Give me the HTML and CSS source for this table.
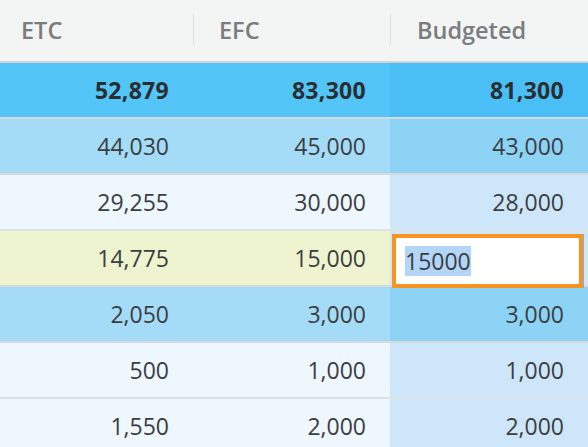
FILE: index.html
```html
<!DOCTYPE html>
<html lang="en">
<head>
    <meta charset="UTF-8">
    <meta name="viewport" content="width=device-width, initial-scale=1.0">
    <title>Budget Grid</title>
    <link rel="stylesheet" href="styles.css">
</head>
<body>
    <div class="grid">
        <!-- Column headers -->
        <div class="row header">
            <div class="cell">ETC</div>
            <div class="cell sep">EFC</div>
            <div class="cell sep">Budgeted</div>
        </div>

        <div class="row total">
            <div class="cell">52,879</div>
            <div class="cell">83,300</div>
            <div class="cell budget">81,300</div>
        </div>
        <div class="row group">
            <div class="cell">44,030</div>
            <div class="cell">45,000</div>
            <div class="cell budget">43,000</div>
        </div>
        <div class="row item">
            <div class="cell">29,255</div>
            <div class="cell">30,000</div>
            <div class="cell budget">28,000</div>
        </div>
        <div class="row editing">
            <div class="cell">14,775</div>
            <div class="cell">15,000</div>
            <div class="cell budget">
                <div class="edit-box"><span class="selected">15000</span></div>
            </div>
        </div>
        <div class="row group">
            <div class="cell">2,050</div>
            <div class="cell">3,000</div>
            <div class="cell budget">3,000</div>
        </div>
        <div class="row item">
            <div class="cell">500</div>
            <div class="cell">1,000</div>
            <div class="cell budget">1,000</div>
        </div>
        <div class="row item">
            <div class="cell">1,550</div>
            <div class="cell">2,000</div>
            <div class="cell budget">2,000</div>
        </div>
    </div>
</body>
</html>
```

FILE: styles.css
```css
body {
    margin: 0;
    padding: 0;
    font-family: "Open Sans", Arial, sans-serif;
    font-size: 23px;
    color: #3b3e41;
    background: #eff6fe;
    overflow: hidden;
}

.grid {
    width: 588px;
}

.row {
    display: grid;
    grid-template-columns: 193px 197px 1fr;
    height: 54px;
    border-bottom: 2px solid #d4dadd;
}

.cell {
    display: flex;
    align-items: center;
    justify-content: flex-end;
    padding-right: 24px;
}

/* Header */
.header {
    height: 61px;
    background-color: #f3f4f4;
    border-bottom: 2px solid #d2d4d5;
}

.header .cell {
    justify-content: flex-start;
    padding-left: 21px;
    color: #7a7c7d;
    font-weight: 600;
    font-size: 23.5px;
    padding-bottom: 2px;
}

.header .sep {
    position: relative;
    padding-left: 26px;
}

.header .sep::before {
    content: "";
    position: absolute;
    left: 0;
    top: 14px;
    height: 31px;
    width: 1px;
    background-color: #dcdfe1;
}

.header .sep:last-child {
    padding-left: 27px;
}

/* Total row */
.total {
    background-color: #53c5f6;
    font-weight: 700;
    color: #2a2e32;
    letter-spacing: 0.3px;
}

.total .budget {
    background-color: #4abff5;
}

/* Group rows */
.group {
    background-color: #a4dcf7;
}

.group .budget {
    background-color: #8dd3f6;
}

/* Item rows */
.item {
    background-color: #eef6fe;
    border-bottom-color: #dde2e5;
}

.item .budget {
    background-color: #cde6fa;
}

/* Row being edited */
.editing {
    background-color: #eef4cf;
}

.editing .budget {
    padding: 3px 5px 0 2px;
    background-color: #cde6fa;
    align-items: stretch;
}

/* Focused input sits over the row border below */
.edit-box {
    position: relative;
    flex: 1;
    margin-bottom: -3px;
    display: flex;
    align-items: center;
    background-color: white;
    border: 4px solid #f7931e;
    padding-left: 9px;
    box-shadow: 1px 0 0 #7fb1da;
}

.selected {
    background-color: #b3d5f7;
    line-height: 30px;
}
```
